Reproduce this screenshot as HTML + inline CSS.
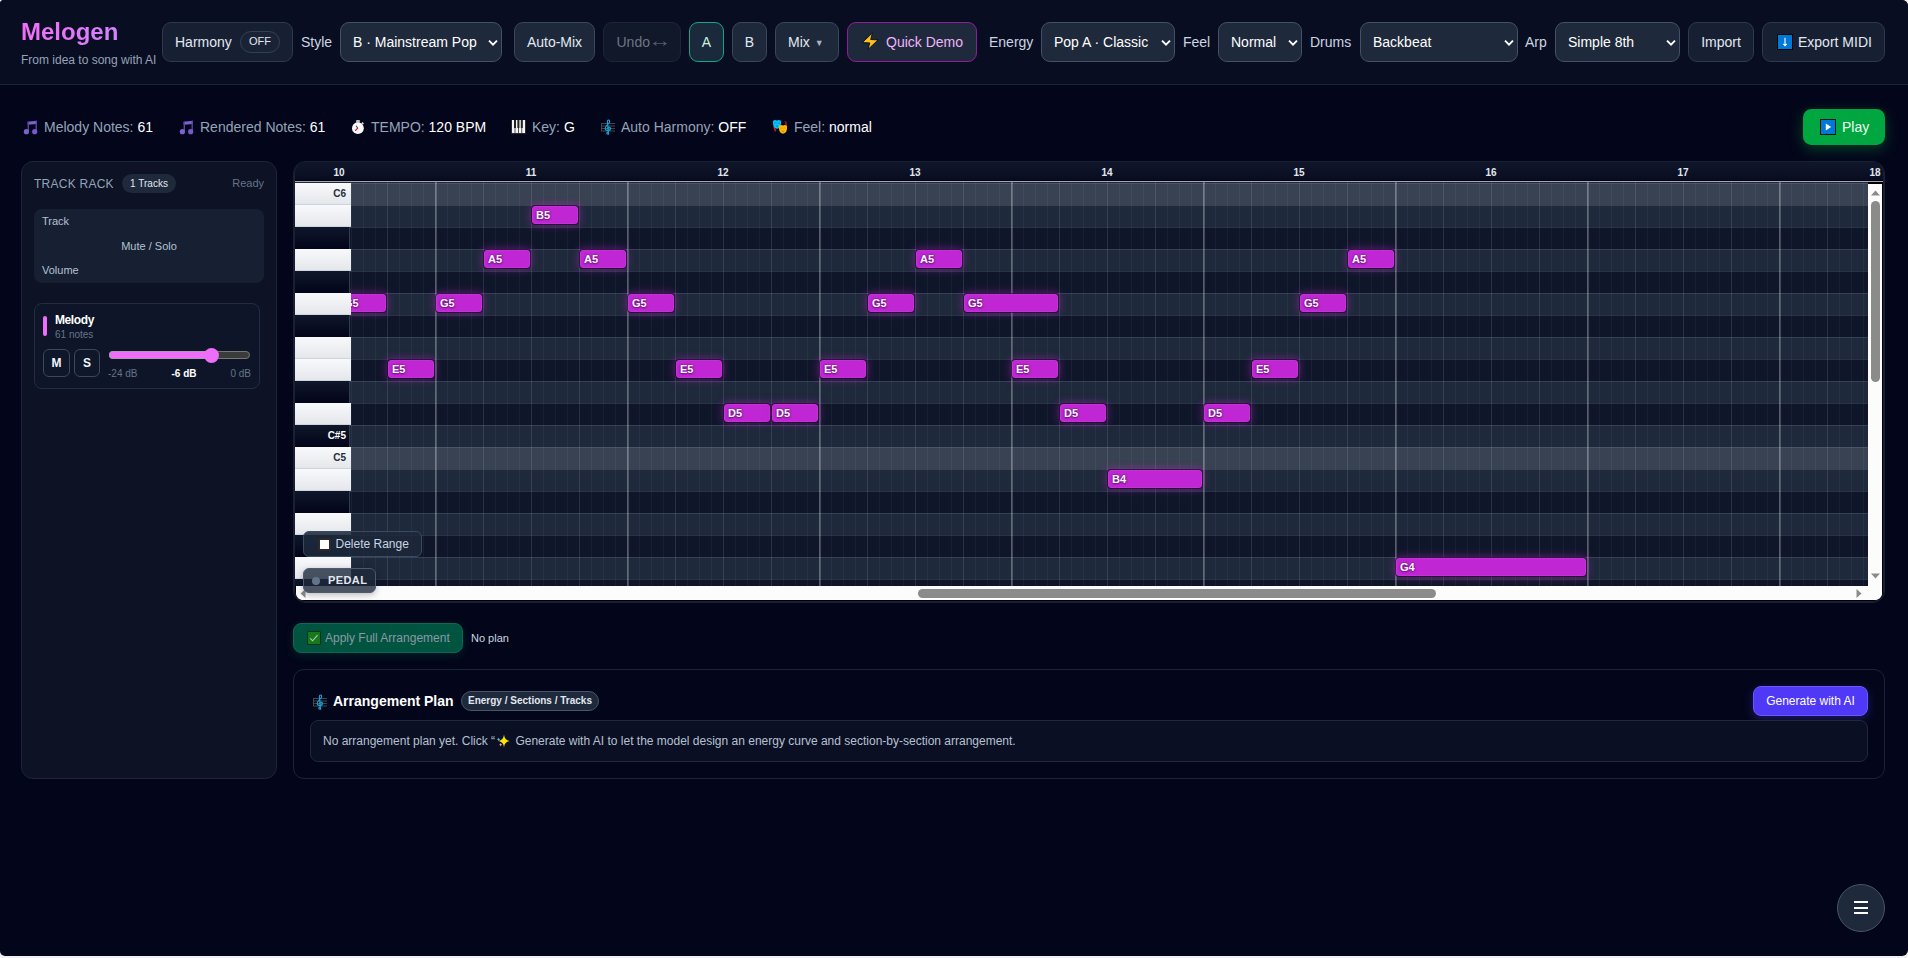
<!DOCTYPE html>
<html lang="en">
<head>
<meta charset="utf-8">
<title>Melogen</title>
<style>
*{box-sizing:border-box;margin:0;padding:0}
html,body{width:1908px;height:958px;overflow:hidden;background:#f1f1f1;font-family:"Liberation Sans","DejaVu Sans",sans-serif;}
#app{position:absolute;left:0;top:0;width:1908px;height:956px;background:#03061a;border-radius:4px 6px 6px 5px;overflow:hidden;color:#e2e8f0}
.abs{position:absolute}
#hdr{position:absolute;left:0;top:0;width:1908px;height:85px;background:#090d21;border-bottom:1px solid #1d2236}
.logo{position:absolute;left:21px;top:17px;font-size:24px;font-weight:700;line-height:30px;background:linear-gradient(90deg,#f36cfa,#d383fe);-webkit-background-clip:text;background-clip:text;color:transparent;-webkit-text-fill-color:transparent}
.tag{position:absolute;left:21px;top:52px;font-size:12px;color:#94a3b8;line-height:16px}
.btn{position:absolute;top:22px;height:40px;border:1px solid #2e394e;border-radius:9px;background:#172033;color:#e2e8f0;font-size:15px;line-height:38px;text-align:center;white-space:nowrap}
.sel{position:absolute;top:22px;height:40px;border:1px solid #435067;border-radius:9px;background:#1e293b;color:#fff;font-size:15px;line-height:38px;padding-left:12px;white-space:nowrap}
.sel svg{position:absolute;right:1px;top:14.500px}
.lbl{position:absolute;top:22px;height:40px;line-height:40px;font-size:15px;color:#cbd5e1}
.pill{position:absolute;left:77px;top:8px;width:40px;height:22px;border:1px solid #334155;border-radius:11px;font-size:11px;line-height:18.500px;text-align:center;color:#e2e8f0;background:#1a2336}
.btn.dis{color:#6e7584;background:#11182a;border-color:#1d2538}
.lbl,.btn,.sel{font-size:14px}
.ic{position:absolute}
.st{position:absolute;top:117px;height:20px;line-height:20px;font-size:14px;color:#94a3b8;white-space:nowrap}
.st b{font-weight:400;color:#fff}
#play{position:absolute;left:1803px;top:109px;width:82px;height:36px;border-radius:8.500px;background:#00a640;color:#eafff1;font-size:14px;line-height:36px;padding-left:39px;box-shadow:0 4px 14px rgba(0,166,62,.35)}
#play .pi{position:absolute;left:17px;top:10px;width:16px;height:16px;background:#0078d7;border:1px solid #06140a}
#rack{position:absolute;left:21px;top:161px;width:256px;height:618px;border:1px solid #1e253a;border-radius:12px;background:#0d1225}
.rk-t{left:12px;top:14px;font-size:12px;letter-spacing:.25px;color:#94a3b8;line-height:16px}
.rk-p{left:100px;top:12px;width:54px;height:19px;border-radius:10px;background:#1e293b;font-size:10px;line-height:19px;text-align:center;color:#e2e8f0}
.rk-r{right:12px;top:14px;font-size:11px;line-height:14px;color:#64748b}
.rk-h{left:12px;top:47px;width:230px;height:74px;border-radius:8px;background:#172033;font-size:11px;line-height:14px;color:#b4c0d2}
.rk-c{left:12px;top:141px;width:226px;height:86px;border:1px solid #222d44;border-radius:8px;background:#0e1528}
.ms{top:45px;width:27px;height:28px;border:1px solid #3a4860;border-radius:6px;background:#0f172a;font-size:12px;font-weight:700;color:#f1f5f9;line-height:26px;text-align:center}
.db{top:64px;font-size:10px;line-height:12px;color:#64748b}
#pr{position:absolute;left:293px;top:161px;width:1592px;height:442px;border:1px solid #1a2034;border-radius:12px;background:#000;overflow:hidden}
#ruler{position:absolute;left:0;top:0;width:1590px;height:18px;background:linear-gradient(#10172a,#080c20)}
#ruler span{position:absolute;top:5px;margin-left:-11px;width:20px;text-align:center;font-size:10px;font-weight:700;color:#e2e8f0;line-height:12px}
#roll{position:absolute;left:1px;top:20px;width:1573px;height:404px;overflow:hidden;background:#1e293b}
.r{position:absolute;left:0;width:1573px;height:22px;background:#1e293b;border-top:1px solid rgba(148,163,184,.2)}
.r.rd{background:#0f162a}
.r.rc{background:#394252}
.vl{position:absolute;left:56px;top:0;width:1517px;height:404px;background:
 repeating-linear-gradient(90deg,transparent 0,transparent 84px,rgba(255,255,255,.22) 84px,rgba(255,255,255,.22) 86px,transparent 86px,transparent 192px),
 repeating-linear-gradient(90deg,transparent 0,transparent 36px,rgba(255,255,255,.07) 36px,rgba(255,255,255,.07) 37px,transparent 37px,transparent 48px),
 repeating-linear-gradient(90deg,rgba(255,255,255,.045) 0,rgba(255,255,255,.045) 1px,transparent 1px,transparent 12px)}
.n{position:absolute;height:20px;border-radius:4px;background:#c026d3;background-clip:padding-box;border:1px solid rgba(20,0,30,.6);box-shadow:0 0 9px rgba(192,38,211,.5),inset 0 0 0 1px rgba(255,255,255,.06);color:#fff;font-size:11px;font-weight:700;line-height:18px;padding-left:4px;text-shadow:0 0 2px rgba(70,0,90,.9),0 1px 2px rgba(70,0,90,.6)}
.k{position:absolute;left:0;height:22px;font-size:10px;font-weight:700;line-height:22px;text-align:right;padding-right:5px}
.kw{width:56px;background:linear-gradient(#f8f9fb,#e6e7eb);border-bottom:1px solid #cbd5e1;color:#262e3b}
.kb{width:55px;background:linear-gradient(#10172a,#02041a);color:#fff;border-right:1px solid #333b4f;padding-right:3px}
#vsb{position:absolute;left:1574px;top:22px;width:14px;height:402px;background:#fcfcfc}
#hsb{position:absolute;left:2px;top:424px;width:1586px;height:14px;background:#fcfcfc;border-radius:0 0 6px 6px}
#delr{position:absolute;left:9px;top:369px;width:119px;height:26px;border:1px solid #3a4a63;border-radius:6px;background:rgba(30,41,59,.88);font-size:12px;line-height:24px;color:#cbd5e1;padding-left:31.5px}
#delr .cb{position:absolute;left:14px;top:6px;width:13px;height:13px;background:#fff;border:2px solid #2b2b2b;border-radius:2px}
#pedal{box-shadow:0 2px 6px rgba(0,0,0,.25);position:absolute;left:9px;top:406px;width:73px;height:25px;border:1px solid #4a5a73;border-radius:6px;background:rgba(30,41,59,.8);font-size:11px;font-weight:700;letter-spacing:.4px;line-height:23px;color:#e2e8f0;padding-left:24px}
#pedal .dot{position:absolute;left:8px;top:8px;width:8px;height:8px;border-radius:50%;background:#64748b}
#apply{position:absolute;left:293px;top:623px;width:170px;height:30px;border-radius:8px;background:#005440;border:1px solid #0a6a55;color:#8b98a3;font-size:12px;line-height:28px;padding-left:31px;box-shadow:0 3px 8px rgba(0,84,64,.3)}
#apply .chk{position:absolute;left:13px;top:7px;width:14px;height:14px;background:#16791a;border:1px solid #0a3416;border-radius:1px}
#arr{position:absolute;left:293px;top:669px;width:1592px;height:110px;border:1px solid #1a2438;border-radius:11px;background:#03061a}
#gen{position:absolute;left:1459px;top:16px;width:115px;height:30px;border-radius:8px;background:#4f39f6;border:1px solid #6a58f8;color:#fff;font-size:12px;line-height:28px;text-align:center;box-shadow:0 3px 10px rgba(79,57,246,.35)}
#arrbox{position:absolute;left:16px;top:50px;width:1558px;height:42px;border:1px solid #1e293b;border-radius:8px;background:#0a0f23;font-size:12px;line-height:40px;color:#b6c1d0;padding-left:12px;white-space:nowrap}
#fab{position:absolute;left:1837px;top:884px;width:48px;height:48px;border-radius:50%;background:#1e293b;border:1px solid #475569}
#fab i{position:absolute;left:16px;width:14px;height:2px;background:#fff}
</style>
</head>
<body>
<div id="app">
<div id="hdr">
  <div class="logo">Melogen</div>
  <div class="tag">From idea to song with AI</div>

  <div class="btn" style="left:162px;width:131px;text-align:left;padding-left:12px">Harmony<span class="pill">OFF</span></div>
  <div class="lbl" style="left:301px">Style</div>
  <div class="sel" style="left:340px;width:162px">B · Mainstream Pop<svg width="14" height="10" viewBox="0 0 14 10"><path d="M3 2.700 L7 6.700 L11 2.700" fill="none" stroke="#fff" stroke-width="1.900"/></svg></div>
  <div class="btn" style="left:514px;width:81px;background:#1d283a;border-color:#3a465c">Auto-Mix</div>
  <div class="btn dis" style="left:603px;width:78px;text-align:left;padding-left:12.500px">Undo <span style="display:inline-block;transform:scale(1.7,1.35);transform-origin:0 60%;margin-left:-5.500px;color:#575e6c">↔</span></div>
  <div class="btn" style="left:689px;width:35px;border-color:#12a883;color:#c9f2de;background:#1b293c">A</div>
  <div class="btn" style="left:732px;width:35px;background:#1d283a;border-color:#3a465c">B</div>
  <div class="btn" style="left:775px;width:64px;background:#1d283a;border-color:#3a465c;text-align:left;padding-left:12px">Mix <span style="font-size:9px;color:#aab2bf;position:relative;top:-1.500px;margin-left:1px">▼</span></div>
  <div class="btn" style="left:847px;width:130px;border-color:#8f1d9b;color:#f0b4fb;background:#1e293b;text-align:left;padding-left:38px"><svg class="abs" style="left:13px;top:9px" width="19" height="19" viewBox="0 0 19 19"><path d="M11.400 0.900 L1.300 10.600 L8.800 10.900 L7 17.400 L17.100 7.900 L9.700 7.500 Z" fill="#fcc21b" stroke="#0a0a12" stroke-width=".9" stroke-linejoin="round"/></svg>Quick Demo</div>
  <div class="lbl" style="left:989px">Energy</div>
  <div class="sel" style="left:1041px;width:134px">Pop A · Classic<svg width="14" height="10" viewBox="0 0 14 10"><path d="M3 2.700 L7 6.700 L11 2.700" fill="none" stroke="#fff" stroke-width="1.900"/></svg></div>
  <div class="lbl" style="left:1183px">Feel</div>
  <div class="sel" style="left:1218px;width:84px">Normal<svg width="14" height="10" viewBox="0 0 14 10"><path d="M3 2.700 L7 6.700 L11 2.700" fill="none" stroke="#fff" stroke-width="1.900"/></svg></div>
  <div class="lbl" style="left:1310px">Drums</div>
  <div class="sel" style="left:1360px;width:158px">Backbeat<svg width="14" height="10" viewBox="0 0 14 10"><path d="M3 2.700 L7 6.700 L11 2.700" fill="none" stroke="#fff" stroke-width="1.900"/></svg></div>
  <div class="lbl" style="left:1525px">Arp</div>
  <div class="sel" style="left:1555px;width:125px">Simple 8th<svg width="14" height="10" viewBox="0 0 14 10"><path d="M3 2.700 L7 6.700 L11 2.700" fill="none" stroke="#fff" stroke-width="1.900"/></svg></div>
  <div class="btn" style="left:1688px;width:66px">Import</div>
  <div class="btn" style="left:1762px;width:123px;text-align:left;padding-left:35px"><span class="abs" style="left:14px;top:11px;width:16px;height:16px;background:#0078d7;border:1px solid #050505"><svg width="14" height="14" viewBox="0 0 14 14" style="display:block"><path d="M7 2.800 V10.400 M5.300 8.800 L7 10.600 L8.700 8.800" fill="none" stroke="#fff" stroke-width="1.100"/></svg></span>Export MIDI</div>
</div>
<!-- stats -->
<div id="stats">
  <svg class="ic" style="left:23px;top:120px" width="15" height="15" viewBox="0 0 15 15"><path d="M4.600 1.700 L13.900 0.700 V3.900 L4.600 4.700Z" fill="#7d61d1"/><path d="M4.600 1.700 H6 V11.500 H4.600Z M12.500 0.800 H13.900 V11.500 H12.500Z" fill="#5b479d"/><circle cx="3.400" cy="11.700" r="2.600" fill="#7d61d1"/><circle cx="11.700" cy="11.700" r="2.600" fill="#7659c6"/></svg>
  <div class="st" style="left:44px">Melody Notes: <b>61</b></div>
  <svg class="ic" style="left:179px;top:120px" width="15" height="15" viewBox="0 0 15 15"><path d="M4.600 1.700 L13.900 0.700 V3.900 L4.600 4.700Z" fill="#7d61d1"/><path d="M4.600 1.700 H6 V11.500 H4.600Z M12.500 0.800 H13.900 V11.500 H12.500Z" fill="#5b479d"/><circle cx="3.400" cy="11.700" r="2.600" fill="#7d61d1"/><circle cx="11.700" cy="11.700" r="2.600" fill="#7659c6"/></svg>
  <div class="st" style="left:200px">Rendered Notes: <b>61</b></div>
  <svg class="ic" style="left:351px;top:119px" width="14" height="16" viewBox="0 0 14 16"><rect x="5.100" y="1" width="3.700" height="2.800" rx=".5" fill="#bdbdbd"/><rect x="10.600" y="3.400" width="2" height="1.800" transform="rotate(40 11.600 4.300)" fill="#d8d8d8"/><circle cx="6.900" cy="9.200" r="5.900" fill="#fafafa"/><path d="M5.300 7.200 L6.700 9" stroke="#555" stroke-width="1.100" stroke-linecap="round"/><path d="M6.700 9.200 L4.500 11.500" stroke="#e8112d" stroke-width="1.100" stroke-linecap="round"/></svg>
  <div class="st" style="left:371px">TEMPO: <b>120 BPM</b></div>
  <svg class="ic" style="left:511px;top:120px" width="15" height="14" viewBox="0 0 15 14"><rect x="0" y="0" width="15" height="14" rx="1" fill="#2b2b2b"/><rect x="1" y="0" width="2.6" height="13" fill="#f5f5f5"/><rect x="4.4" y="0" width="2.6" height="13" fill="#f5f5f5"/><rect x="7.8" y="0" width="2.6" height="13" fill="#f5f5f5"/><rect x="11.2" y="0" width="2.8" height="13" fill="#f5f5f5"/><rect x="3" y="0" width="2" height="8" fill="#222"/><rect x="6.4" y="0" width="2" height="8" fill="#222"/><rect x="9.8" y="0" width="2" height="8" fill="#222"/></svg>
  <div class="st" style="left:532px">Key: <b>G</b></div>
  <svg class="ic" style="left:600px;top:119px" width="16" height="16" viewBox="0 0 16 16"><g stroke="#4d4d4d" stroke-width=".9"><path d="M1 4.500H15M1 7H15M1 9.500H15M1 12H15M1.500 4.500V12"/></g><path d="M8.600 15.200 C6.600 15.600 6.200 13.400 7.800 13.200 M8.600 15.200 L7.400 2.600 C7.400 0.600 9.800 0.200 9.600 2.800 C9.400 5 5 6.600 5.200 9.400 C5.400 12 9.800 12.400 10.400 10 C10.800 7.800 7.600 7.400 7.400 9.600" fill="none" stroke="#14a3d6" stroke-width="1.150" stroke-linecap="round"/></svg>
  <div class="st" style="left:621px">Auto Harmony: <b>OFF</b></div>
  <svg class="ic" style="left:772px;top:119px" width="16" height="16" viewBox="0 0 16 16"><path d="M1.300 7 Q1.500 10.600 3.300 13 L4.400 11 Q2.800 9.500 2.800 8.400Z" fill="#e8112d"/><path d="M13 1.800 Q15.200 3 14.800 6.200 L13.300 6 Q14 4 12.800 2.600Z" fill="#e8112d"/><path d="M1.100 1.800 Q2.800 0.500 5 1.600 Q7.200 0.500 8.900 1.800 Q9.500 6.500 7.500 8.700 Q5 10.900 2.500 8.700 Q0.500 6.500 1.100 1.800Z" fill="#00c3fa"/><path d="M7.100 6.700 Q8.800 5.400 11 6.500 Q13.200 5.400 14.900 6.700 Q15.500 11.400 13.500 13.600 Q11 15.800 8.500 13.600 Q6.500 11.400 7.100 6.700Z" fill="#fdb900"/><path d="M2.400 4.200 q1.100 -.7 2 0 M5.600 4.200 q1 -.7 2 0" stroke="#0a86c9" stroke-width=".9" fill="none"/><ellipse cx="5" cy="7" rx="1.100" ry=".6" fill="#0866b0"/><path d="M8.500 9.300 q1 -.9 2 0 M11.500 9.300 q1 -.9 2 0" stroke="#d29307" stroke-width=".9" fill="none"/><ellipse cx="11" cy="12.200" rx="1.300" ry=".7" fill="#c98a1a"/></svg>
  <div class="st" style="left:794px">Feel: <b>normal</b></div>
  <div id="play"><span class="pi"><svg width="14" height="14" viewBox="0 0 14 14" style="display:block"><path d="M4.800 3.400 L10.200 7 L4.800 10.600Z" fill="#fff"/></svg></span>Play</div>
</div>

<!-- track rack -->
<div id="rack">
  <div class="abs rk-t">TRACK RACK</div>
  <div class="abs rk-p">1 Tracks</div>
  <div class="abs rk-r">Ready</div>
  <div class="abs rk-h">
    <div class="abs" style="left:8px;top:5px">Track</div>
    <div class="abs" style="left:0;width:230px;text-align:center;top:30px">Mute / Solo</div>
    <div class="abs" style="left:8px;top:54px">Volume</div>
  </div>
  <div class="abs rk-c">
    <div class="abs" style="left:8px;top:12px;width:4px;height:20px;border-radius:2px;background:#ee6efa"></div>
    <div class="abs" style="left:20px;top:8px;font-size:12px;font-weight:700;color:#fff;line-height:16px;letter-spacing:-.4px">Melody</div>
    <div class="abs" style="left:20px;top:25px;font-size:10px;color:#64748b;line-height:12px">61 notes</div>
    <div class="abs ms" style="left:8px">M</div>
    <div class="abs ms" style="left:39px;width:26px">S</div>
    <div class="abs" style="left:74px;top:47px;width:141px;height:8px;border-radius:4px;background:#3b3b3b;border:1px solid #767676"></div>
    <div class="abs" style="left:74px;top:47px;width:104px;height:8px;border-radius:4px 0 0 4px;background:#ee6efa;border:1px solid #b592ba;border-right:0"></div>
    <div class="abs" style="left:169px;top:44px;width:15px;height:15px;border-radius:50%;background:#ee6efa"></div>
    <div class="abs db" style="left:73px">-24 dB</div>
    <div class="abs db" style="left:129px;width:40px;text-align:center;color:#fff;font-weight:700">-6 dB</div>
    <div class="abs db" style="right:8px">0 dB</div>
  </div>
</div>

<!-- piano roll panel -->
<div id="pr">
  <div id="ruler">
    <span style="left:46px">10</span><span style="left:238px">11</span><span style="left:430px">12</span><span style="left:622px">13</span><span style="left:814px">14</span><span style="left:1006px">15</span><span style="left:1198px">16</span><span style="left:1390px">17</span><span style="left:1582px">18</span>
  </div>
  <div class="abs" style="left:0;top:18px;width:1590px;height:1px;background:#010314"></div>
  <div class="abs" style="left:0;top:19px;width:1590px;height:1px;background:#a3a7b3"></div>
<div id="roll">
<div class="r rc" style="top:1px"></div>
<div class="r" style="top:23px"></div>
<div class="r rd" style="top:45px"></div>
<div class="r" style="top:67px"></div>
<div class="r rd" style="top:89px"></div>
<div class="r" style="top:111px"></div>
<div class="r rd" style="top:133px"></div>
<div class="r" style="top:155px"></div>
<div class="r rd" style="top:177px"></div>
<div class="r" style="top:199px"></div>
<div class="r rd" style="top:221px"></div>
<div class="r" style="top:243px"></div>
<div class="r rc" style="top:265px"></div>
<div class="r" style="top:287px"></div>
<div class="r rd" style="top:309px"></div>
<div class="r" style="top:331px"></div>
<div class="r rd" style="top:353px"></div>
<div class="r" style="top:375px"></div>
<div class="r rd" style="top:397px"></div>
<div class="vl"></div>
<div class="n" style="left:236px;top:23px;width:48px">B5</div>
<div class="n" style="left:188px;top:67px;width:48px">A5</div>
<div class="n" style="left:284px;top:67px;width:48px">A5</div>
<div class="n" style="left:620px;top:67px;width:48px">A5</div>
<div class="n" style="left:1052px;top:67px;width:48px">A5</div>
<div class="n" style="left:44px;top:111px;width:48px">G5</div>
<div class="n" style="left:140px;top:111px;width:48px">G5</div>
<div class="n" style="left:332px;top:111px;width:48px">G5</div>
<div class="n" style="left:572px;top:111px;width:48px">G5</div>
<div class="n" style="left:668px;top:111px;width:96px">G5</div>
<div class="n" style="left:1004px;top:111px;width:48px">G5</div>
<div class="n" style="left:92px;top:177px;width:48px">E5</div>
<div class="n" style="left:380px;top:177px;width:48px">E5</div>
<div class="n" style="left:524px;top:177px;width:48px">E5</div>
<div class="n" style="left:716px;top:177px;width:48px">E5</div>
<div class="n" style="left:956px;top:177px;width:48px">E5</div>
<div class="n" style="left:428px;top:221px;width:48px">D5</div>
<div class="n" style="left:476px;top:221px;width:48px">D5</div>
<div class="n" style="left:764px;top:221px;width:48px">D5</div>
<div class="n" style="left:908px;top:221px;width:48px">D5</div>
<div class="n" style="left:812px;top:287px;width:96px">B4</div>
<div class="n" style="left:1100px;top:375px;width:192px">G4</div>
<div class="k kw" style="top:1px">C6</div>
<div class="k kw" style="top:23px"></div>
<div class="k kb" style="top:45px"></div>
<div class="k kw" style="top:67px"></div>
<div class="k kb" style="top:89px"></div>
<div class="k kw" style="top:111px"></div>
<div class="k kb" style="top:133px"></div>
<div class="k kw" style="top:155px"></div>
<div class="k kw" style="top:177px"></div>
<div class="k kb" style="top:199px"></div>
<div class="k kw" style="top:221px"></div>
<div class="k kb" style="top:243px">C#5</div>
<div class="k kw" style="top:265px">C5</div>
<div class="k kw" style="top:287px"></div>
<div class="k kb" style="top:309px"></div>
<div class="k kw" style="top:331px"></div>
<div class="k kb" style="top:353px"></div>
<div class="k kw" style="top:375px"></div>
<div class="k kb" style="top:397px"></div>
</div>
  <div id="vsb"><svg class="abs" style="left:3px;top:6px" width="9" height="6" viewBox="0 0 9 6"><path d="M0 5.500 L4.500 0.500 L9 5.500Z" fill="#8b8b8b"/></svg><div class="abs" style="left:3px;top:17px;width:9px;height:181px;border-radius:4.500px;background:#8b8b8b"></div><svg class="abs" style="left:3px;top:388.500px" width="9" height="6" viewBox="0 0 9 6"><path d="M0 0.500 L4.500 5.500 L9 0.500Z" fill="#8b8b8b"/></svg></div>
  <div id="hsb"><svg class="abs" style="left:4px;top:3px" width="6" height="9" viewBox="0 0 6 9"><path d="M5.500 0 L0.500 4.500 L5.500 9Z" fill="#8b8b8b"/></svg><div class="abs" style="left:622px;top:3px;width:518px;height:9px;border-radius:4.500px;background:#8b8b8b"></div><svg class="abs" style="left:1560px;top:3px" width="6" height="9" viewBox="0 0 6 9"><path d="M0.500 0 L5.500 4.500 L0.500 9Z" fill="#8b8b8b"/></svg></div>
  <div class="abs" style="left:0;top:0;width:1590px;height:440px;border:1px solid #1a1f33;border-radius:11px;border-top-color:transparent"></div>
  <div id="delr"><span class="cb"></span>Delete Range</div>
  <div id="pedal"><span class="dot"></span>PEDAL</div>
</div>

<!-- apply row -->
<div id="apply"><span class="chk"><svg width="12" height="12" viewBox="0 0 12 12" style="display:block"><path d="M2.300 6.400 L4.600 8.800 L9.600 3.200" fill="none" stroke="#b9c6bd" stroke-width="1.100"/></svg></span>Apply Full Arrangement</div>
<div class="abs" style="left:471px;top:631px;font-size:11px;line-height:14px;color:#cbd5e1">No plan</div>

<!-- arrangement -->
<div id="arr">
  <svg class="abs" style="left:18px;top:24px" width="16" height="16" viewBox="0 0 16 16"><g stroke="#4d4d4d" stroke-width=".9"><path d="M1 4.500H15M1 7H15M1 9.500H15M1 12H15M1.500 4.500V12"/></g><path d="M8.600 15.200 C6.600 15.600 6.200 13.400 7.800 13.200 M8.600 15.200 L7.400 2.600 C7.400 0.600 9.800 0.200 9.600 2.800 C9.400 5 5 6.600 5.200 9.400 C5.400 12 9.800 12.400 10.400 10 C10.800 7.800 7.600 7.400 7.400 9.600" fill="none" stroke="#14a3d6" stroke-width="1.150" stroke-linecap="round"/></svg>
  <div class="abs" style="left:39px;top:21px;font-size:14px;font-weight:700;color:#fff;line-height:20px">Arrangement Plan</div>
  <div class="abs" style="left:167px;top:21px;width:138px;height:20px;border:1px solid #475569;border-radius:10px;background:#1e293b;font-size:10px;font-weight:700;color:#e2e8f0;line-height:18px;text-align:center">Energy / Sections / Tracks</div>
  <div id="gen">Generate with AI</div>
  <div id="arrbox">No arrangement plan yet. Click “<svg width="14" height="14" viewBox="0 0 14 14" style="vertical-align:-3px;margin:0 2px 0 1px"><path d="M8 0.600 Q8.500 6.300 13.600 7 Q8.500 7.700 8 13.400 Q7.500 7.700 2.400 7 Q7.500 6.300 8 0.600Z" fill="#ffe500"/><path d="M2.600 3.500 Q2.850 5.150 4.400 5.400 Q2.850 5.650 2.600 7.300 Q2.350 5.650 0.800 5.400 Q2.350 5.150 2.600 3.500Z" fill="#35c3e8"/><path d="M4.700 9 Q4.950 10.550 6.400 10.800 Q4.950 11.050 4.700 12.600 Q4.450 11.050 3 10.800 Q4.450 10.550 4.700 9Z" fill="#f49ac1"/></svg> Generate with AI to let the model design an energy curve and section-by-section arrangement.</div>
</div>

<div id="fab"><i style="top:16px"></i><i style="top:22px"></i><i style="top:27px"></i></div>
</div>
</body>
</html>
